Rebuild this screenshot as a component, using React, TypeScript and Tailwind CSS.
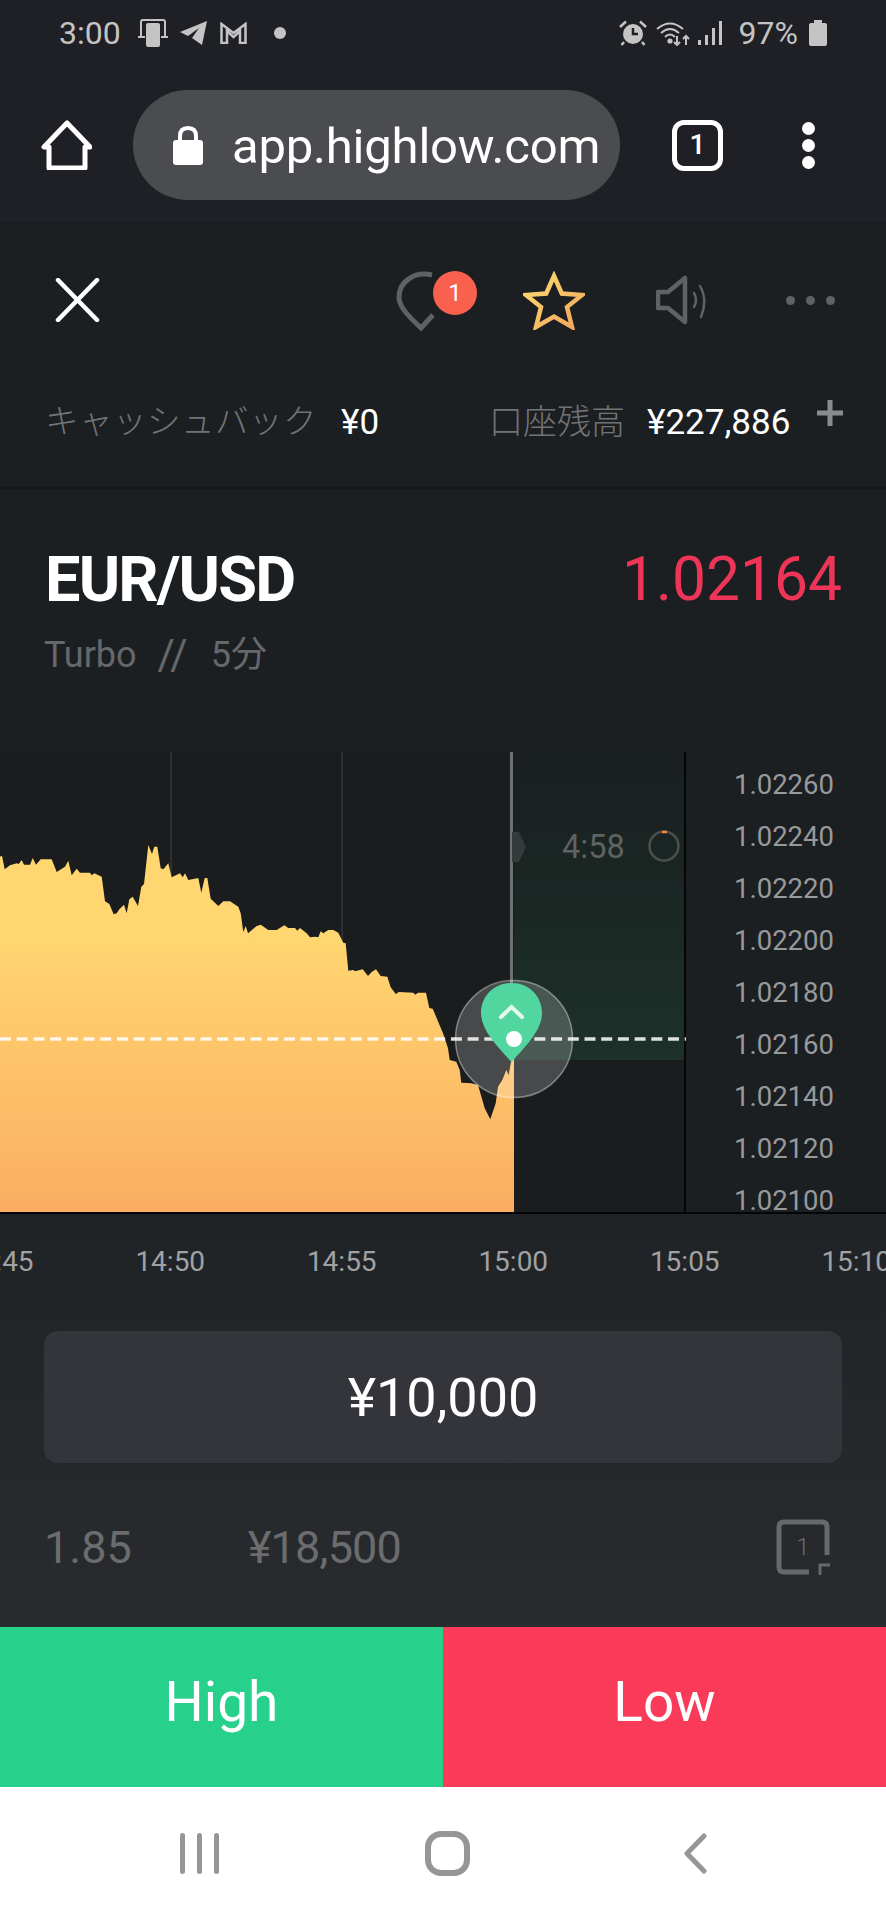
const fontStack = "font-['Roboto','Noto_Sans_CJK_JP',sans-serif]";

// chart outline, traced at 3x from the reference
const trace: number[][] = [
  [0,350],[6,347],[14,388],[30,376],[50,370],[56,372],[65,360],[72,374],[90,374],[98,354],[108,374],[122,358],[155,358],[170,396],[195,380],[205,362],[215,406],[230,386],[240,398],[270,398],[275,406],[283,400],[305,410],[315,484],[328,492],[341,523],[350,520],[358,508],[372,494],[380,520],[388,478],[398,470],[414,498],[424,440],[432,432],[445,315],[456,342],[463,320],[472,320],[482,385],[490,388],[505,370],[515,412],[540,400],[548,412],[555,400],[565,420],[595,414],[604,458],[614,414],[622,414],[632,476],[655,498],[670,484],[690,484],[715,500],[722,520],[730,576],[737,558],[744,580],[770,558],[782,554],[805,570],[830,570],[853,556],[865,564],[885,564],[892,572],[900,564],[920,580],[930,592],[945,590],[955,592],[962,574],[970,580],[985,570],[1000,570],[1015,578],[1030,608],[1037,610],[1045,692],[1060,690],[1065,694],[1088,688],[1104,708],[1115,696],[1128,688],[1142,708],[1162,710],[1172,742],[1187,762],[1197,756],[1240,758],[1246,764],[1254,758],[1278,758],[1288,804],[1298,806],[1329,880],[1344,925],[1349,960],[1369,965],[1379,990],[1384,1028],[1414,1030],[1434,1035],[1454,1105],[1471,1138],[1487,1090],[1494,1040],[1507,1020],[1519,990],[1526,1005],[1534,960],[1542,860],
];

const areaPath =
  "M0 460 " +
  trace.map(([x, y]) => `L${(x / 3).toFixed(1)} ${(y / 3 - 12).toFixed(1)}`).join(" ") +
  " L514 460 Z";

const axisPrices = ["1.02260", "1.02240", "1.02220", "1.02200", "1.02180", "1.02160", "1.02140", "1.02120", "1.02100"];
const timeLabels = ["14:45", "14:50", "14:55", "15:00", "15:05", "15:10"];

function StatusBar() {
  return (
    <div className="flex h-[66px] items-center text-[32px] text-[#c4c4c4]">
      <span className="ml-[59px] w-[79px] leading-none">3:00</span>
      <svg width="30" height="28" viewBox="0 0 30 28" fill="none">
        <path d="M3 17V3Q3 1 5 1H25Q27 1 27 3V17" stroke="#c4c4c4" strokeWidth="2" />
        <path d="M0 18H7M23 18H30" stroke="#c4c4c4" strokeWidth="2" />
        <rect x="8" y="4" width="14" height="24" rx="2" fill="#c4c4c4" />
      </svg>
      <svg className="ml-[12px]" width="27" height="24" viewBox="0 0 27 24" fill="#c4c4c4">
        <path d="M27 0L22 24L12 17L19 7L8 15L0 11Z" />
      </svg>
      <svg className="ml-[13px]" width="27" height="22" viewBox="0 0 27 22" fill="none" stroke="#c4c4c4" strokeWidth="2.5">
        <path d="M1.5 21V2L13.5 11L25.5 2V21H20V9L13.5 15L7 9V21Z" />
      </svg>
      <span className="ml-[27px] size-[12px] rounded-full bg-[#c4c4c4]" />
      <svg className="ml-auto" width="28" height="26" viewBox="0 0 28 26" fill="#c4c4c4">
        <circle cx="14" cy="14" r="10" />
        <path d="M1 7L7 1.5M27 7L21 1.5M5 22L2.5 25M23 22L25.5 25" stroke="#c4c4c4" strokeWidth="2.5" />
        <path d="M14 8V14H19" stroke="#1f2025" strokeWidth="2.5" fill="none" />
      </svg>
      <svg className="ml-[9px]" width="34" height="25" viewBox="0 0 34 25" fill="none" stroke="#c4c4c4" strokeWidth="2">
        <path d="M1 8Q14 -3 27 8" />
        <path d="M5 12Q14 4 23 12" />
        <path d="M9 16Q14 11 19 16" />
        <circle cx="14" cy="20" r="1.6" fill="#c4c4c4" />
        <path d="M21 15V24M18 21L21 24L24 21M30 24V15M27 18L30 15L33 18" />
      </svg>
      <svg className="ml-[8px]" width="24" height="24" viewBox="0 0 24 24" fill="#c4c4c4">
        <rect x="0" y="19" width="3" height="5" />
        <rect x="7" y="14" width="3" height="10" />
        <rect x="14" y="7" width="3" height="17" />
        <rect x="21" y="0" width="3" height="24" />
      </svg>
      <span className="ml-[17px] leading-none">97%</span>
      <svg className="mr-[59px] ml-[11px]" width="18" height="26" viewBox="0 0 18 26" fill="#c4c4c4">
        <path d="M5 0H13V3H16Q18 3 18 5V24Q18 26 16 26H2Q0 26 0 24V5Q0 3 2 3H5Z" />
      </svg>
    </div>
  );
}

function BrowserBar() {
  return (
    <div className="flex items-center pt-[24px] pb-[24px]">
      <svg className="ml-[41px]" width="51" height="50" viewBox="0 0 51 50" fill="none" stroke="#fff" strokeWidth="5" strokeLinejoin="round">
        <path d="M26 3L3 27H8V48H44V27H49Z" />
      </svg>
      <div className="ml-[41px] flex h-[110px] w-[487px] items-center rounded-full bg-[#4b4c50]">
        <svg className="ml-[40px]" width="30" height="39" viewBox="0 0 30 39" fill="none">
          <path d="M7 16V10Q7 2 15 2Q23 2 23 10V16" stroke="#fff" strokeWidth="4" />
          <rect y="14" width="30" height="25" rx="3" fill="#fff" />
        </svg>
        <span className="mt-[3px] ml-[29px] text-[49px] leading-none tracking-[-0.2px] text-white">app.highlow.com</span>
      </div>
      <div className="ml-[52px] flex h-[51px] w-[51px] items-center justify-center rounded-[12px] border-[5px] border-white text-[28px] font-medium text-white">
        1
      </div>
      <div className="ml-[79px] flex flex-col gap-[4px]">
        <span className="size-[13px] rounded-full bg-white" />
        <span className="size-[13px] rounded-full bg-white" />
        <span className="size-[13px] rounded-full bg-white" />
      </div>
    </div>
  );
}

function TradeHeader() {
  return (
    <div className="flex h-[152px] items-center">
      <svg className="ml-[55px]" width="45" height="44" viewBox="0 0 45 44" fill="none" stroke="#fff" strokeWidth="4.5" strokeLinecap="round">
        <path d="M3 2L42 42M42 2L3 42" />
      </svg>
      <div className="relative ml-[296px] h-[60px] w-[81px]">
        <svg width="40" height="62" viewBox="0 0 40 62" fill="none" stroke="#5f6163" strokeWidth="5">
          <path d="M36 5C18 1 3 12 3 27C3 36 10 44 25 58L37 45" />
        </svg>
        <span className="absolute top-[1px] left-[37px] flex size-[44px] items-center justify-center rounded-full bg-[#f9614e] text-[24px] leading-none text-white">
          1
        </span>
      </div>
      <svg className="ml-[46px]" width="62" height="59" viewBox="0 0 62 59" fill="none">
        <defs>
          <linearGradient id="starStroke" x1="0" y1="0" x2="1" y2="1">
            <stop offset="0" stopColor="#fbdc72" />
            <stop offset="1" stopColor="#f3a45a" />
          </linearGradient>
        </defs>
        <path
          d="M31 5L38.8 22.5L59 24L44 36L49 56L31 45.5L13 56L18 36L3 24L23.2 22.5Z"
          stroke="url(#starStroke)"
          strokeWidth="4.5"
        />
      </svg>
      <svg className="ml-[71px]" width="51" height="50" viewBox="0 0 51 50" fill="none" stroke="#5f6163" strokeLinecap="round" strokeLinejoin="round">
        <path d="M2 17H12L29 3V47L12 33H2Z" strokeWidth="4.5" />
        <path d="M38 18Q42 25 38 32M44 11Q52 25 45 42" strokeWidth="2.5" />
      </svg>
      <div className="ml-[79px] flex gap-[11px]">
        <span className="size-[9px] rounded-full bg-[#5f6163]" />
        <span className="size-[9px] rounded-full bg-[#5f6163]" />
        <span className="size-[9px] rounded-full bg-[#5f6163]" />
      </div>
    </div>
  );
}

function BalanceRow() {
  return (
    <div className="border-b-2 border-[#15171a] pb-[19px]">
      <div className="flex h-[92px] items-center leading-none">
        <span className="ml-[45px] text-[33.5px] font-light tracking-[0.5px] text-[#727375]">キャッシュバック</span>
        <span className="ml-[24px] text-[35px] text-white">¥0</span>
        <span className="ml-[110px] text-[34px] font-light text-[#727375]">口座残高</span>
        <span className="ml-[22px] text-[35px] text-white">¥227,886</span>
        <svg className="mb-[18px] ml-[27px]" width="26" height="26" viewBox="0 0 26 26" fill="#8a8b8d">
          <rect x="10.5" width="5" height="26" />
          <rect y="10.5" width="26" height="5" />
        </svg>
      </div>
    </div>
  );
}

function Instrument() {
  return (
    <div className="flex h-[263px] items-start justify-between px-[44px] pt-[62px]">
      <div>
        <div className="ml-[1px] text-[63px] leading-[58px] font-bold tracking-[-1.8px] text-white">EUR/USD</div>
        <div className="mt-[26px] flex items-center text-[36px] leading-[40px] text-[#66686a]">
          <span>Turbo</span>
          <span className="ml-[21px] text-[42px]">//</span>
          <span className="ml-[23px]">5分</span>
        </div>
      </div>
      <div className="text-[60.5px] leading-[58px] text-[#ee3558]">1.02164</div>
    </div>
  );
}

function Chart() {
  return (
    <div className="flex h-[462px] border-b-2 border-[#050505]">
      <div className="relative h-[460px] w-[686px] shrink-0 bg-[#1a1c1e]">
        <svg className="absolute inset-0" width="686" height="460" viewBox="0 0 686 460" fill="none">
          <defs>
            <linearGradient id="areaFill" x1="0" y1="0" x2="0" y2="1">
              <stop offset="0.25" stopColor="#ffd670" />
              <stop offset="1" stopColor="#fbad61" />
            </linearGradient>
            <linearGradient id="zoneFill" x1="0" y1="0" x2="0" y2="1">
              <stop offset="0" stopColor="#1a1f20" />
              <stop offset="1" stopColor="#1c3129" />
            </linearGradient>
          </defs>
          <rect x="170" width="2" height="200" fill="#2c2e31" />
          <rect x="341" width="2" height="200" fill="#2c2e31" />
          <rect x="514" width="170" height="308" fill="url(#zoneFill)" />
          <rect x="510" width="3" height="240" fill="#6f7072" />
          <path d="M512 80L519 80L526 95L519 110L512 110Z" fill="#353a3a" />
          <path d={areaPath} fill="url(#areaFill)" />
          <rect x="684" width="3" height="460" fill="#050505" />
          <line x1="0" y1="287" x2="688" y2="287" stroke="#fff" strokeOpacity="0.85" strokeWidth="3.5" strokeDasharray="11 5.7" />
          <circle cx="514" cy="287" r="58.5" fill="#fff" fillOpacity="0.2" stroke="#fff" strokeOpacity="0.4" strokeWidth="1.5" />
          <path d="M511.5 310C497 294 481 278 481 261C481 244 494 231 511.5 231C529 231 542 244 542 261C542 278 526 294 511.5 310Z" fill="#52d6a0" />
          <path d="M501 265L511.5 255L522 265" stroke="#e4f8ef" strokeWidth="4" strokeLinecap="round" />
          <circle cx="514" cy="287" r="8" fill="#fff" />
          <circle cx="664" cy="94" r="14.5" stroke="#4a4f4e" strokeWidth="2.5" />
          <path d="M662 80H667" stroke="#ef8a3c" strokeWidth="2.5" />
        </svg>
        <span className="absolute top-[79px] left-[562px] text-[32.5px] leading-[32px] text-[#5e6362]">4:58</span>
      </div>
      <div className="h-[460px] flex-1 overflow-hidden pt-[7px] pl-[48px] text-[27.5px] leading-[52px] text-[#98999b]">
        {axisPrices.map((price) => (
          <div key={price} className="h-[52px]">
            {price}
          </div>
        ))}
      </div>
    </div>
  );
}

function TimeAxis() {
  return (
    <div className="flex h-[94px] items-center overflow-hidden pt-[2px]">
      <div className="-ml-[87px] flex shrink-0">
        {timeLabels.map((label) => (
          <span key={label} className="w-[171.5px] shrink-0 text-center text-[28px] leading-none text-[#a0a1a3]">
            {label}
          </span>
        ))}
      </div>
    </div>
  );
}

function TradePanel() {
  return (
    <div className="px-[44px] pt-[23px]">
      <div className="flex h-[132px] items-center justify-center rounded-[14px] bg-[#33353a] pt-[2px] text-[54px] leading-none text-white">
        ¥10,000
      </div>
      <div className="flex h-[164px] items-center pt-[4px] text-[45px] leading-none text-[#6a6c6e]">
        <span>1.85</span>
        <span className="ml-[116px] tracking-[-0.8px]">¥18,500</span>
        <div className="relative mr-[12px] ml-auto h-[56px] w-[54px]">
          <svg width="54" height="56" viewBox="0 0 54 56" fill="none" stroke="#66686a">
            <path d="M33 53H8Q3 53 3 48V8Q3 3 8 3H46Q51 3 51 8V36" strokeWidth="5" />
            <path d="M44 56V46H54" strokeWidth="3" />
          </svg>
          <span className="absolute inset-0 flex items-center justify-center text-[24px] font-light">1</span>
        </div>
      </div>
    </div>
  );
}

function NavBar() {
  return (
    <div className="flex h-[133px] items-center bg-white">
      <svg className="ml-[180px]" width="39" height="41" viewBox="0 0 39 41" fill="#969696">
        <rect width="5" height="41" rx="2.5" />
        <rect x="17" width="5" height="41" rx="2.5" />
        <rect x="34" width="5" height="41" rx="2.5" />
      </svg>
      <svg className="ml-[206px]" width="45" height="45" viewBox="0 0 45 45" fill="none" stroke="#969696" strokeWidth="6">
        <rect x="3" y="3" width="39" height="39" rx="13" />
      </svg>
      <svg className="ml-[214px]" width="23" height="41" viewBox="0 0 23 41" fill="none" stroke="#969696" strokeWidth="5" strokeLinecap="round" strokeLinejoin="round">
        <path d="M20 3L3 20.5L20 38" />
      </svg>
    </div>
  );
}

export default function App() {
  return (
    <div className={`h-[1920px] w-[886px] overflow-hidden bg-[#1c1f22] ${fontStack}`}>
      {/* Phone status + browser chrome */}
      <div className="h-[224px] border-b border-[#191b1e] bg-[#1f2025]">
        <StatusBar />
        <BrowserBar />
      </div>

      <div className="bg-[#1c1f22]">
        <TradeHeader />
        <BalanceRow />
        <Instrument />
      </div>

      <Chart />

      <div className="bg-linear-to-b from-[#1f2326] to-[#292b2f]">
        <TimeAxis />
        <TradePanel />
      </div>

      <div className="flex h-[160px] text-[55px] leading-none text-white">
        <button className="flex w-[443px] items-center justify-center bg-[#28d18b] pb-[10px]">High</button>
        <button className="flex w-[443px] items-center justify-center bg-[#f93a58] pb-[10px]">Low</button>
      </div>

      <NavBar />
    </div>
  );
}
